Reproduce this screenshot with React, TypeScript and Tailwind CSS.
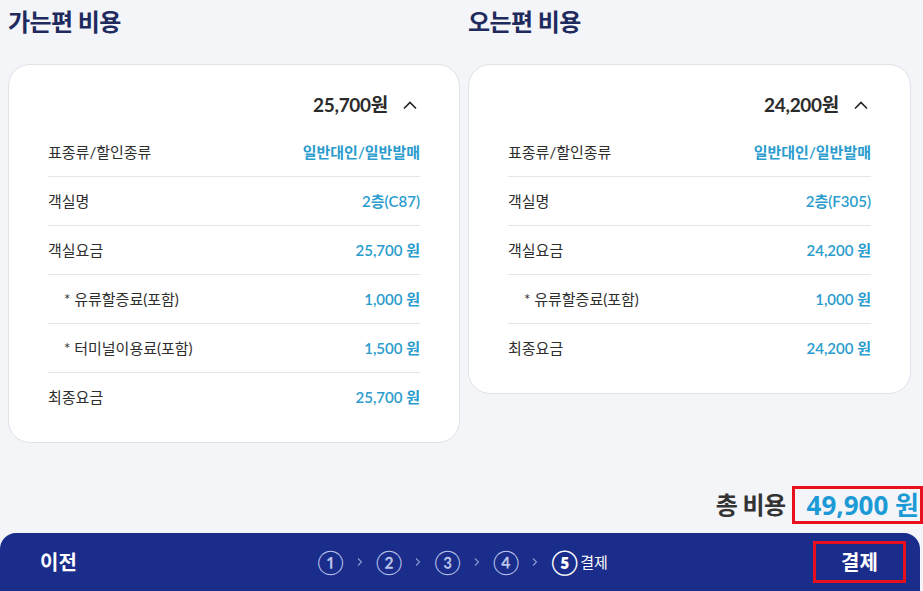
import React from "react";

type Row = { label: string; value: string; indent?: boolean };

const outbound: Row[] = [
  { label: "표종류/할인종류", value: "일반대인/일반발매" },
  { label: "객실명", value: "2층(C87)" },
  { label: "객실요금", value: "25,700 원" },
  { label: "* 유류할증료(포함)", value: "1,000 원", indent: true },
  { label: "* 터미널이용료(포함)", value: "1,500 원", indent: true },
  { label: "최종요금", value: "25,700 원" },
];

const inbound: Row[] = [
  { label: "표종류/할인종류", value: "일반대인/일반발매" },
  { label: "객실명", value: "2층(F305)" },
  { label: "객실요금", value: "24,200 원" },
  { label: "* 유류할증료(포함)", value: "1,000 원", indent: true },
  { label: "최종요금", value: "24,200 원" },
];

function ChevronUp() {
  return (
    <svg width="16" height="10" viewBox="0 0 16 10" fill="none">
      <polyline points="2,8.5 8,2.5 14,8.5" stroke="#222" strokeWidth="1.6" fill="none" />
    </svg>
  );
}

function Card({ total, rows }: { total: string; rows: Row[] }) {
  return (
    <div className="bg-white border border-[#dfe2e7] rounded-[22px] px-[39px] pb-[20px]">
      <div className="flex items-center justify-end pt-[28px] pb-[11px] pr-[2px] gap-[14px]">
        <span className="text-[19px] leading-[24px] font-bold text-[#2b2b2b] tracking-[-0.3px]">{total}</span>
        <ChevronUp />
      </div>
      <div className="flex flex-col">
        {rows.map((r, i) => (
          <div
            key={i}
            className={
              "flex items-center justify-between h-[49px] " +
              (i < rows.length - 1 ? "border-b border-[#e4e6ea]" : "")
            }
          >
            <span className={"text-[15px] text-[#2e2e2e] " + (r.indent ? "pl-[16px]" : "")}>{r.label}</span>
            <span className="text-[15px] font-semibold text-[#2a9ccd]">{r.value}</span>
          </div>
        ))}
      </div>
    </div>
  );
}

function Chev() {
  return (
    <svg width="6" height="10" viewBox="0 0 6 10" fill="none">
      <polyline points="1,1.5 4.5,5 1,8.5" stroke="#8d9bd3" strokeWidth="1.1" fill="none" />
    </svg>
  );
}

export default function App() {
  return (
    <div
      className="w-[923px] h-[591px] bg-[#f3f5f8] overflow-hidden flex flex-col"
      style={{ fontFamily: "Lato, 'Noto Sans CJK KR', 'Noto Sans', sans-serif" }}
    >
      <div className="flex pl-[8px] gap-[8px] items-start">
        <div className="w-[452px] flex flex-col">
          <h2 className="mt-[8px] text-[24px] leading-[28px] font-bold text-[#1f2a5e] tracking-[-0.6px]">가는편 비용</h2>
          <div className="mt-[28px]">
            <Card total="25,700원" rows={outbound} />
          </div>
        </div>
        <div className="w-[443px] flex flex-col">
          <h2 className="mt-[8px] text-[24px] leading-[28px] font-bold text-[#1f2a5e] tracking-[-0.6px]">오는편 비용</h2>
          <div className="mt-[28px]">
            <Card total="24,200원" rows={inbound} />
          </div>
        </div>
      </div>

      <div className="flex-1" />

      <div className="flex items-center justify-end mb-[9px]">
        <span className="text-[24px] font-bold text-[#333] mr-[6px] tracking-[-0.6px]">총 비용</span>
        <span
          className="border-[3px] border-[#e8101c] pl-[12px] pr-[1px] h-[38px] flex items-center text-[26px] font-bold text-[#1c9ad6] leading-none"
          style={{ fontFamily: "'Noto Sans', 'Noto Sans CJK KR', sans-serif" }}
        >
          49,900 원
        </span>
      </div>

      <div className="w-[920px] h-[58px] bg-[#1b2d8b] rounded-t-[16px] flex items-center shrink-0">
        <div className="w-[200px] pl-[40px]">
          <span className="text-white text-[20px] font-bold">이전</span>
        </div>
        <div className="flex-1 flex items-center justify-center text-[#b9c3ea]">
          <div className="flex items-center gap-[13px] pl-[5px]">
            <span className="text-[24px] leading-none">①</span>
            <Chev />
            <span className="text-[24px] leading-none">②</span>
            <Chev />
            <span className="text-[24px] leading-none">③</span>
            <Chev />
            <span className="text-[24px] leading-none">④</span>
            <Chev />
            <span className="flex items-center text-white">
              <span className="text-[24px] leading-none font-bold">⑤</span>
              <span className="text-[15px] ml-[2px]">결제</span>
            </span>
          </div>
        </div>
        <div className="w-[200px] flex justify-end pr-[14px]">
          <span className="border-[3px] border-[#e8101c] w-[93px] h-[42px] flex items-center justify-center text-white text-[20px] font-bold">
            결제
          </span>
        </div>
      </div>
    </div>
  );
}
